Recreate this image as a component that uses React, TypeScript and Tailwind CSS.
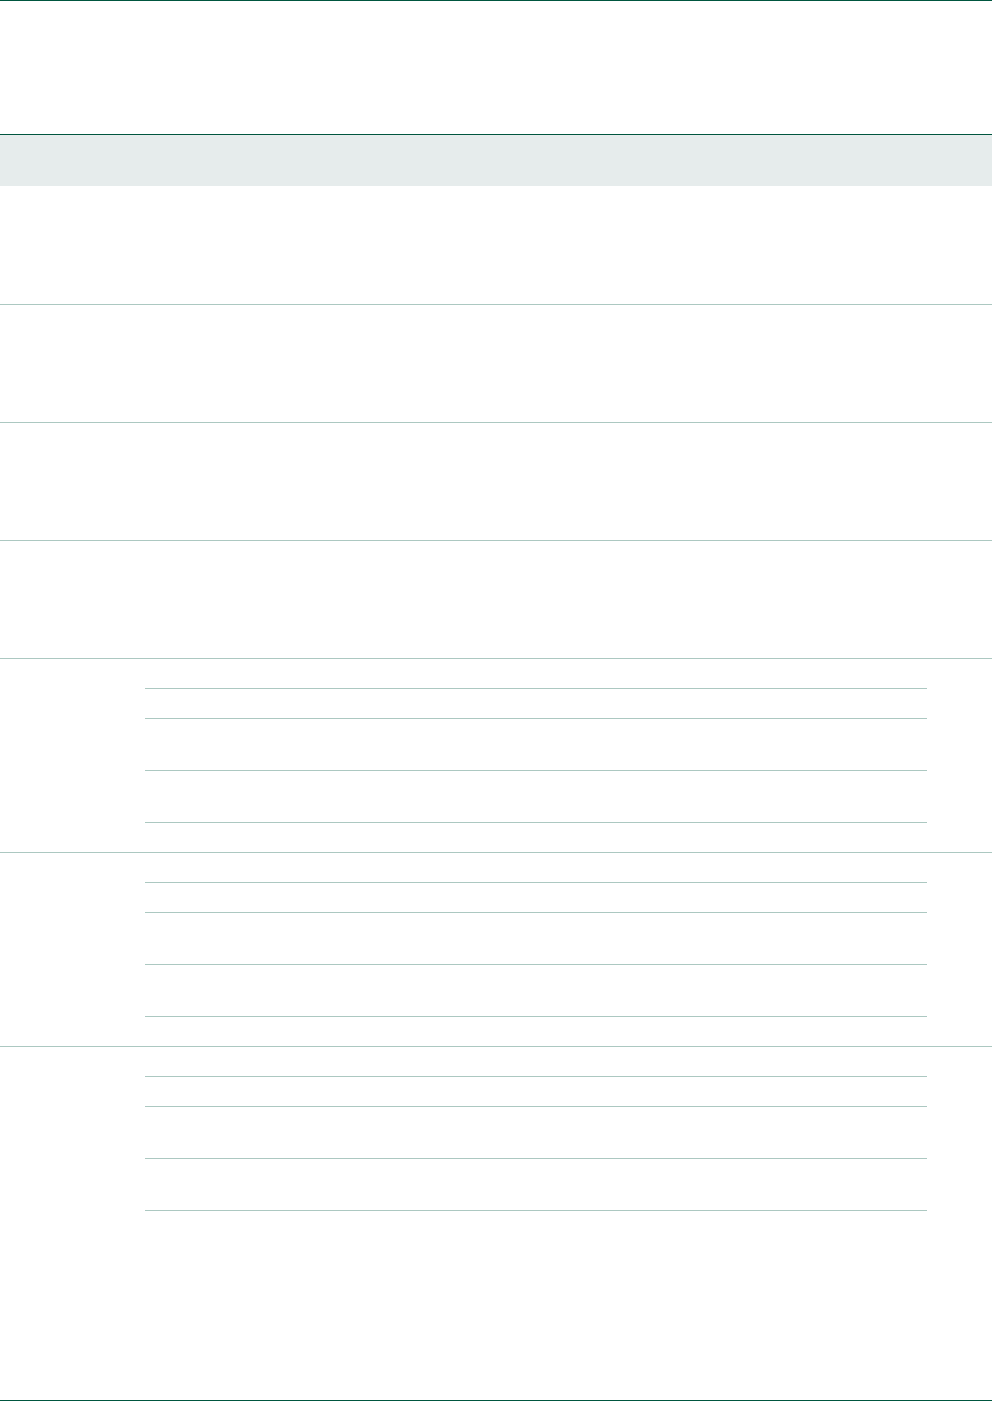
const simpleRows = [0, 1, 2, 3];
const groupRows = [0, 1, 2];

function GroupRow({ last }: { last?: boolean }) {
  return (
    <div className={`border-t border-[#acc8c1] pl-[145px] pr-[65px] pt-[29px] ${last ? 'pb-[189px]' : 'pb-[29px]'}`}>
      <div className="h-[30px] border-t border-[#acc8c1]" />
      <div className="h-[52px] border-t border-[#acc8c1]" />
      <div className="h-[53px] border-t border-b border-[#acc8c1]" />
    </div>
  );
}

export default function App() {
  return (
    <div className="w-[992px] bg-white font-['Liberation_Sans',sans-serif]">
      <div className="border-t border-b border-[#00563f] h-[135px]" />
      <div className="h-[51px] bg-[#e6ecec]" />

      {simpleRows.map((i) => (
        <div
          key={i}
          className={`h-[118px] ${i === 0 ? '' : 'border-t border-[#acc8c1]'}`}
        />
      ))}

      <div className="border-b border-[#00563f]">
        {groupRows.map((i) => (
          <GroupRow key={i} last={i === groupRows.length - 1} />
        ))}
      </div>
    </div>
  );
}
